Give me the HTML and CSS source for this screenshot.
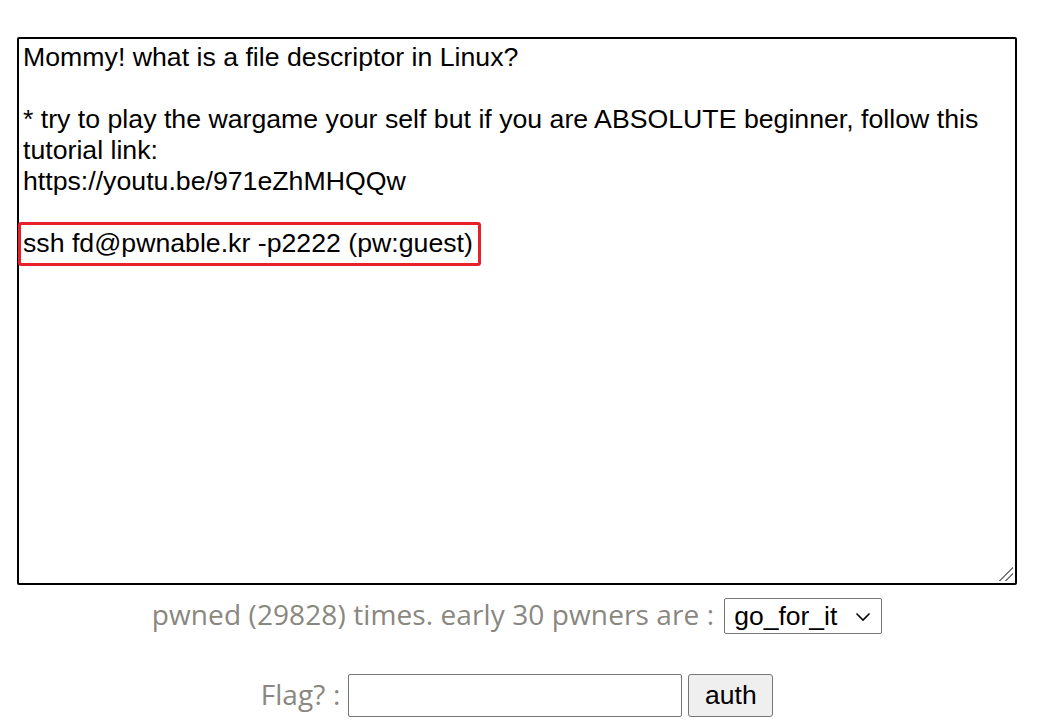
FILE: index.html
```html
<!DOCTYPE html>
<html>
<head>
<meta charset="utf-8">
<link rel="stylesheet" href="styles.css">
</head>
<body>
<div class="page">
  <div class="desc">
    <p class="line">Mommy! what is a file descriptor in Linux?</p>
    <p class="line blank">&nbsp;</p>
    <p class="line">* try to play the wargame your self but if you are ABSOLUTE beginner, follow this tutorial link:</p>
    <p class="line">https://youtu.be/971eZhMHQQw</p>
    <p class="line blank">&nbsp;</p>
    <p class="line"><span class="boxed">ssh fd@pwnable.kr -p2222 (pw:guest)</span></p>
    <span class="grip"></span>
  </div>
  <div class="row pwned-row">
    <span class="label">pwned (29828) times. early 30 pwners are :</span>
    <div class="select">
      <span>go_for_it</span>
      <svg class="chev" width="16" height="10" viewBox="0 0 16 10"><path d="M1.5 1.5 L8 8 L14.5 1.5" fill="none" stroke="#000" stroke-width="1.6"/></svg>
    </div>
  </div>
  <div class="row flag-row">
    <span class="label">Flag? :</span>
    <div class="input"></div>
    <div class="btn">auth</div>
  </div>
</div>
</body>
</html>
```
FILE: styles.css
```css
html, body {
  margin: 0;
  padding: 0;
  background: #fff;
}
.page {
  width: 1000px;
  padding: 37px 0 0 17px;
  display: flex;
  flex-direction: column;
  align-items: center;
}
.desc {
  position: relative;
  box-sizing: border-box;
  width: 1000px;
  height: 548px;
  border: 2px solid #000;
  border-radius: 2px;
  padding: 3px 4px;
  font-family: "Liberation Sans", Arial, sans-serif;
  font-size: 26.7px;
  line-height: 31px;
  color: #000;
}
.line {
  margin: 0;
}
.boxed {
  display: inline-block;
  outline: 3px solid #e8202a;
  outline-offset: -1px;
  padding: 4px 6px 5px 3px;
  margin: -4px 0 -5px -3px;
  border-radius: 1px;
}
.grip {
  position: absolute;
  right: 2px;
  bottom: 2px;
  width: 14px;
  height: 14px;
  background:
    linear-gradient(135deg, transparent 0 48%, #777 48% 54%, transparent 54% 70%, #777 70% 76%, transparent 76%);
}
.row {
  display: flex;
  align-items: center;
  font-family: "Open Sans", sans-serif;
  font-stretch: 100%;
  color: #898780;
  font-size: 28px;
  letter-spacing: 0.1px;
}
.pwned-row {
  margin-top: 13px;
  height: 36px;
}
.label {
  margin-right: 10px;
  position: relative;
  top: -2px;
}
.select {
  box-sizing: border-box;
  height: 36px;
  width: 158px;
  border: 1px solid #767676;
  border-radius: 2px;
  display: flex;
  align-items: center;
  justify-content: space-between;
  padding: 0 10px 0 9px;
  font-family: "Liberation Sans", Arial, sans-serif;
  font-stretch: normal;
  letter-spacing: 0;
  font-size: 26.5px;
  color: #000;
}
.chev {
  margin-top: 2px;
}
.flag-row {
  margin-top: 40px;
  height: 43px;
}
.flag-row .label {
  margin-right: 8px;
}
.input {
  box-sizing: border-box;
  width: 334px;
  height: 43px;
  border: 1px solid #767676;
  border-radius: 2px;
  margin-right: 6px;
}
.btn {
  box-sizing: border-box;
  width: 85px;
  height: 43px;
  border: 1px solid #767676;
  border-radius: 3px;
  background: #efefef;
  display: flex;
  align-items: center;
  justify-content: center;
  font-family: "Liberation Sans", Arial, sans-serif;
  font-stretch: normal;
  letter-spacing: 0;
  font-size: 26.5px;
  color: #000;
}
```
